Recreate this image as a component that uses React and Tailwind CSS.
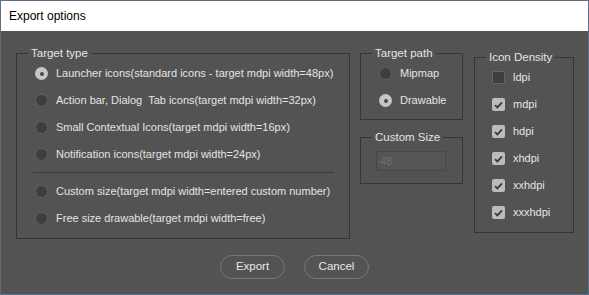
import React, { useState } from 'react';

const font = { fontFamily: '"Liberation Sans", Arial, sans-serif' };

function Radio({ checked, onClick, label }) {
  return (
    <div onClick={onClick} className="flex items-center h-[27px] gap-[8px] cursor-default">
      <div
        className={`w-[13px] h-[13px] rounded-full flex items-center justify-center shrink-0 ${
          checked ? 'bg-[#c6c6c6]' : 'bg-[#3e3e3e] border border-[#606060]'
        }`}
      >
        {checked && <div className="w-[4px] h-[4px] rounded-full bg-[#4a4a4a]" />}
      </div>
      <span className="text-[11px] text-[#e4e4e4] whitespace-pre">{label}</span>
    </div>
  );
}

function Check({ checked, onClick, label }) {
  return (
    <div onClick={onClick} className="flex items-center h-[27px] gap-[8px] cursor-default">
      <div
        className={`w-[13px] h-[13px] rounded-[2px] flex items-center justify-center shrink-0 ${
          checked ? 'bg-[#bcbcbc]' : 'bg-[#3e3e3e] border border-[#666666]'
        }`}
      >
        {checked && (
          <svg width="9" height="8" viewBox="0 0 9 8">
            <path d="M1 4.2 L3.4 6.4 L8 1.4" fill="none" stroke="#3a3a3a" strokeWidth="1.8" />
          </svg>
        )}
      </div>
      <span className="text-[11px] text-[#e4e4e4]">{label}</span>
    </div>
  );
}

function Group({ title, className, children }) {
  return (
    <fieldset className={`border border-[#363636] p-0 m-0 min-w-0 ${className}`}>
      <legend className="ml-[11px] px-[3px] text-[11.5px] leading-[14px] text-[#e4e4e4]">{title}</legend>
      {children}
    </fieldset>
  );
}

export default function App() {
  const [type, setType] = useState('launcher');
  const [path, setPath] = useState('drawable');
  const [dens, setDens] = useState({ ldpi: false, mdpi: true, hdpi: true, xhdpi: true, xxhdpi: true, xxxhdpi: true });

  const types = [
    ['launcher', 'Launcher icons(standard icons - target mdpi width=48px)'],
    ['action', 'Action bar, Dialog  Tab icons(target mdpi width=32px)'],
    ['small', 'Small Contextual Icons(target mdpi width=16px)'],
    ['notif', 'Notification icons(target mdpi width=24px)'],
  ];
  const types2 = [
    ['custom', 'Custom size(target mdpi width=entered custom number)'],
    ['free', 'Free size drawable(target mdpi width=free)'],
  ];

  return (
    <div style={font} className="w-[589px] h-[295px] border border-[#5d7083] bg-[#535353] flex flex-col">
      <div className="h-[30px] bg-white flex items-center pl-[8px] text-[12px] text-black">Export options</div>

      <div className="flex pl-[15px] pt-[15px]">
        <Group title="Target type" className="w-[334px]">
          <div className="pl-[18px] pr-[15px] pb-[6px]">
            {types.map(([id, label]) => (
              <Radio key={id} checked={type === id} onClick={() => setType(id)} label={label} />
            ))}
            <div className="h-px bg-[#3a3a3a] mt-[4px] mb-[5px] -ml-[2px]" />
            {types2.map(([id, label]) => (
              <Radio key={id} checked={type === id} onClick={() => setType(id)} label={label} />
            ))}
          </div>
        </Group>

        <div className="ml-[10px] w-[103px] flex flex-col gap-[10px]">
          <Group title="Target path">
            <div className="pl-[18px] pb-[5px]">
              <Radio checked={path === 'mipmap'} onClick={() => setPath('mipmap')} label="Mipmap" />
              <Radio checked={path === 'drawable'} onClick={() => setPath('drawable')} label="Drawable" />
            </div>
          </Group>
          <Group title="Custom Size">
            <div className="pl-[15px] pt-[4px] pb-[11px]">
              <input
                disabled
                value="48"
                readOnly
                className="w-[70px] h-[20px] bg-[#555555] border border-[#474747] px-[3px] text-[11px] text-[#6f6f6f] outline-none"
                style={font}
              />
            </div>
          </Group>
        </div>

        <Group title="Icon Density" className="ml-[11px] w-[100px] mt-[4px] self-start">
          <div className="pl-[17px] pb-[6px]">
            {Object.keys(dens).map((k) => (
              <Check key={k} checked={dens[k]} onClick={() => setDens({ ...dens, [k]: !dens[k] })} label={k} />
            ))}
          </div>
        </Group>
      </div>

      <div className="flex justify-center gap-[19px] mt-[16px]">
        <button className="w-[65px] h-[24px] rounded-full border border-[#777777] text-[11.5px] text-[#e8e8e8]">Export</button>
        <button className="w-[65px] h-[24px] rounded-full border border-[#777777] text-[11.5px] text-[#e8e8e8]">Cancel</button>
      </div>
    </div>
  );
}
